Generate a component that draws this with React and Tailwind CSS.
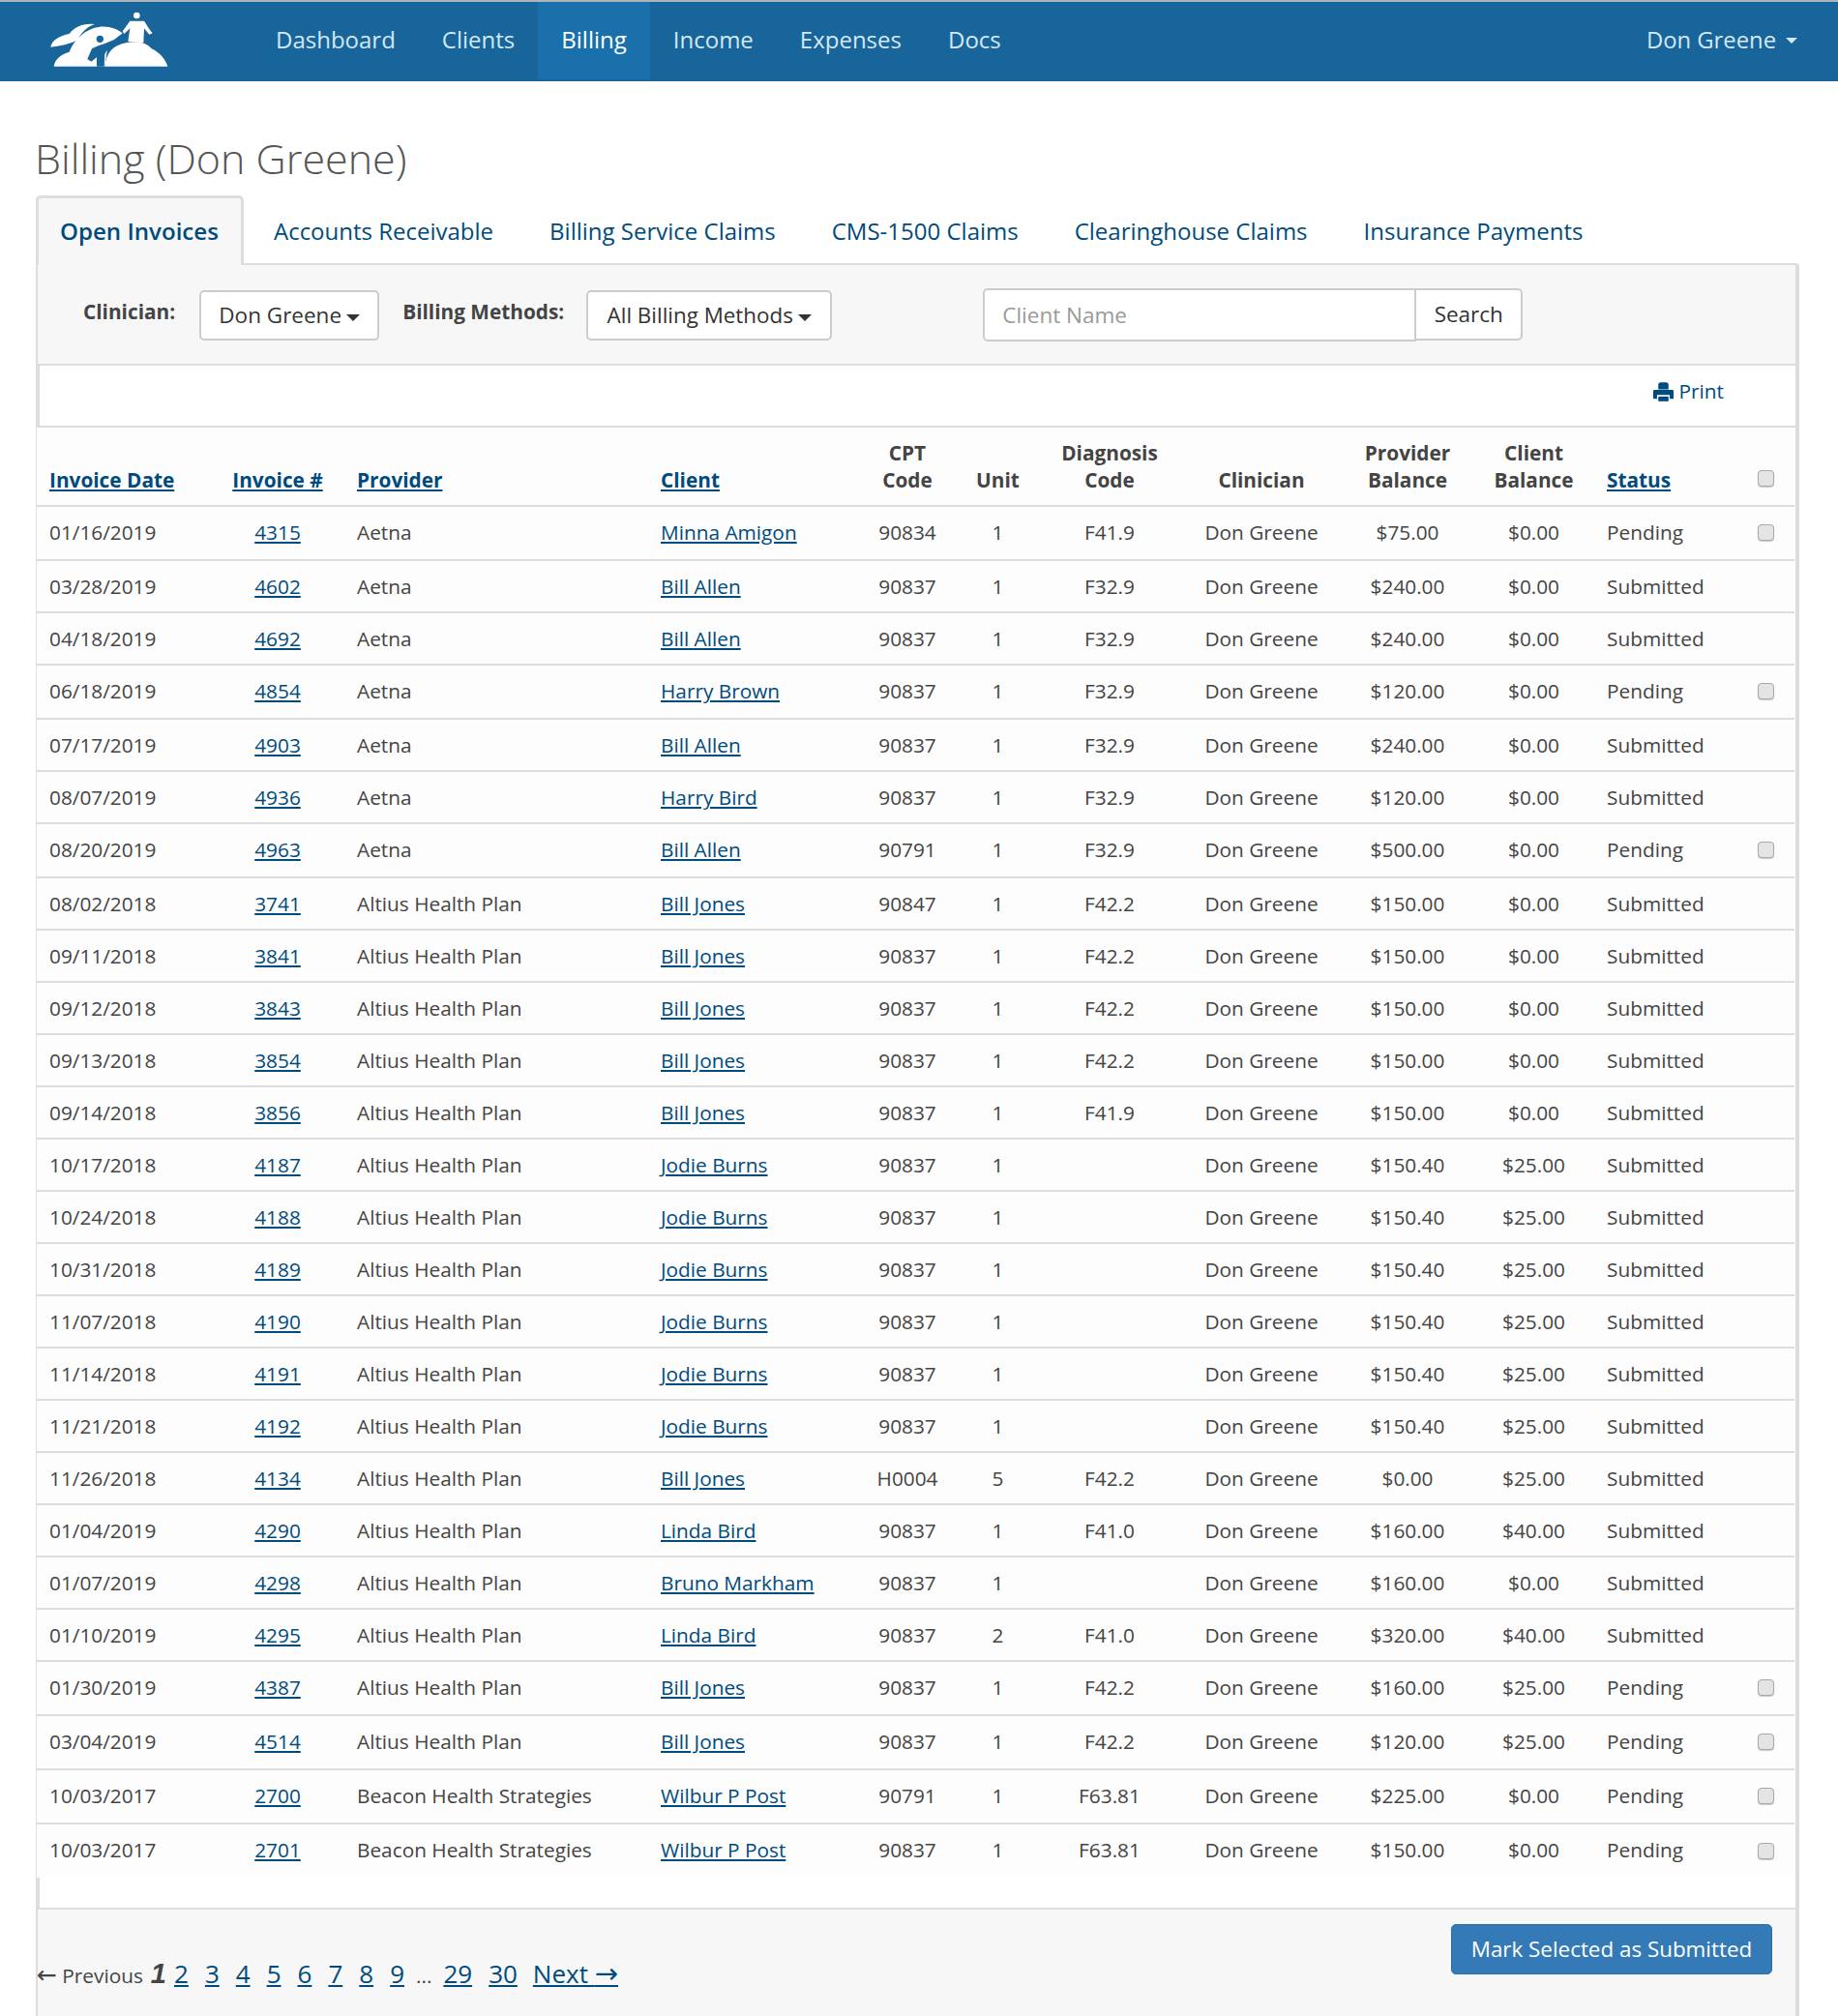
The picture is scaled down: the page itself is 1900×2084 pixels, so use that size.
const navItems = ["Dashboard", "Clients", "Billing", "Income", "Expenses", "Docs"];
const tabs = ["Accounts Receivable", "Billing Service Claims", "CMS-1500 Claims", "Clearinghouse Claims", "Insurance Payments"];

const rows = [
  ["01/16/2019", "4315", "Aetna", "Minna Amigon", "90834", "1", "F41.9", "$75.00", "$0.00", "Pending"],
  ["03/28/2019", "4602", "Aetna", "Bill Allen", "90837", "1", "F32.9", "$240.00", "$0.00", "Submitted"],
  ["04/18/2019", "4692", "Aetna", "Bill Allen", "90837", "1", "F32.9", "$240.00", "$0.00", "Submitted"],
  ["06/18/2019", "4854", "Aetna", "Harry Brown", "90837", "1", "F32.9", "$120.00", "$0.00", "Pending"],
  ["07/17/2019", "4903", "Aetna", "Bill Allen", "90837", "1", "F32.9", "$240.00", "$0.00", "Submitted"],
  ["08/07/2019", "4936", "Aetna", "Harry Bird", "90837", "1", "F32.9", "$120.00", "$0.00", "Submitted"],
  ["08/20/2019", "4963", "Aetna", "Bill Allen", "90791", "1", "F32.9", "$500.00", "$0.00", "Pending"],
  ["08/02/2018", "3741", "Altius Health Plan", "Bill Jones", "90847", "1", "F42.2", "$150.00", "$0.00", "Submitted"],
  ["09/11/2018", "3841", "Altius Health Plan", "Bill Jones", "90837", "1", "F42.2", "$150.00", "$0.00", "Submitted"],
  ["09/12/2018", "3843", "Altius Health Plan", "Bill Jones", "90837", "1", "F42.2", "$150.00", "$0.00", "Submitted"],
  ["09/13/2018", "3854", "Altius Health Plan", "Bill Jones", "90837", "1", "F42.2", "$150.00", "$0.00", "Submitted"],
  ["09/14/2018", "3856", "Altius Health Plan", "Bill Jones", "90837", "1", "F41.9", "$150.00", "$0.00", "Submitted"],
  ["10/17/2018", "4187", "Altius Health Plan", "Jodie Burns", "90837", "1", "", "$150.40", "$25.00", "Submitted"],
  ["10/24/2018", "4188", "Altius Health Plan", "Jodie Burns", "90837", "1", "", "$150.40", "$25.00", "Submitted"],
  ["10/31/2018", "4189", "Altius Health Plan", "Jodie Burns", "90837", "1", "", "$150.40", "$25.00", "Submitted"],
  ["11/07/2018", "4190", "Altius Health Plan", "Jodie Burns", "90837", "1", "", "$150.40", "$25.00", "Submitted"],
  ["11/14/2018", "4191", "Altius Health Plan", "Jodie Burns", "90837", "1", "", "$150.40", "$25.00", "Submitted"],
  ["11/21/2018", "4192", "Altius Health Plan", "Jodie Burns", "90837", "1", "", "$150.40", "$25.00", "Submitted"],
  ["11/26/2018", "4134", "Altius Health Plan", "Bill Jones", "H0004", "5", "F42.2", "$0.00", "$25.00", "Submitted"],
  ["01/04/2019", "4290", "Altius Health Plan", "Linda Bird", "90837", "1", "F41.0", "$160.00", "$40.00", "Submitted"],
  ["01/07/2019", "4298", "Altius Health Plan", "Bruno Markham", "90837", "1", "", "$160.00", "$0.00", "Submitted"],
  ["01/10/2019", "4295", "Altius Health Plan", "Linda Bird", "90837", "2", "F41.0", "$320.00", "$40.00", "Submitted"],
  ["01/30/2019", "4387", "Altius Health Plan", "Bill Jones", "90837", "1", "F42.2", "$160.00", "$25.00", "Pending"],
  ["03/04/2019", "4514", "Altius Health Plan", "Bill Jones", "90837", "1", "F42.2", "$120.00", "$25.00", "Pending"],
  ["10/03/2017", "2700", "Beacon Health Strategies", "Wilbur P Post", "90791", "1", "F63.81", "$225.00", "$0.00", "Pending"],
  ["10/03/2017", "2701", "Beacon Health Strategies", "Wilbur P Post", "90837", "1", "F63.81", "$150.00", "$0.00", "Pending"],
];

const pages = ["2", "3", "4", "5", "6", "7", "8", "9"];

function Logo() {
  return (
    <svg width="135" height="62" viewBox="0 0 405 186" fill="#fff">
      <path d="M22 113C25 92 50 78 80 72C95 50 125 38 158 42C135 50 118 68 105 92C75 104 50 110 22 113Z" />
      <path d="M32 173C35 150 55 135 80 128C95 90 130 55 175 50C205 47 230 58 245 70L200 105L190 173Z" />
      <path d="M190 173C195 130 215 108 255 100C290 92 320 100 335 118C360 130 378 150 385 173Z" />
      <circle cx="289" cy="15" r="10" />
      <path d="M268 32L312 32C320 45 330 60 338 70L328 74L312 55L310 100L262 95L268 55L250 72L245 64Z" />
      <circle cx="175" cy="88" r="11" fill="#17659a" />
      <path
        d="M136 150L150 118C170 108 200 100 232 85L236 90C215 110 195 120 190 135L188 173L165 173L165 145L148 158Z"
        fill="#17659a"
      />
    </svg>
  );
}

function PrintIcon() {
  return (
    <svg width="21" height="20" viewBox="0 0 64 60" fill="currentColor">
      <path d="M16 22V8Q16 0 24 0H40Q48 0 48 8V22Z" />
      <path d="M4 24H60Q64 24 64 28V52H52V40H12V52H0V28Q0 24 4 24Z" />
      <path d="M16 45H48V60H16Z" />
    </svg>
  );
}

function Caret({ className }) {
  return <span className={`inline-block w-0 h-0 border-x-[6px] border-x-transparent border-t-[6px] ${className}`} />;
}

function SelectCaret() {
  return <span className="inline-block w-0 h-0 mt-[4px] border-x-[7px] border-x-transparent border-t-[7px] border-t-[#333]" />;
}

function Navbar() {
  return (
    <nav className="h-[84px] flex bg-[#17659a] border-t-2 border-[#a9b4bb] pl-[45px] pr-[42px]">
      <div className="w-[216px] h-full flex items-center pb-[3px]">
        <Logo />
      </div>
      <ul className="flex flex-1 h-[80px]">
        {navItems.map((item) => (
          <li key={item}>
            <a
              href="#"
              className={`flex h-full items-center pb-[2px] px-[24px] text-[24px] ${
                item === "Billing" ? "bg-[#1a70ab] text-white" : "text-[#d4e8f5]"
              }`}
            >
              {item}
            </a>
          </li>
        ))}
      </ul>
      <a href="#" className="flex h-[80px] items-center gap-[10px] text-[23.8px] text-[#d4e8f5]">
        Don Greene
        <Caret className="border-t-[#d4e8f5]" />
      </a>
    </nav>
  );
}

function TabBar() {
  return (
    <ul className="flex h-[72px] relative z-10">
      <li className="h-[72px] border-[3px] border-b-0 border-[#ddd] rounded-t-[5px] bg-[#f7f7f7] pl-[22px] pr-[23px] flex items-center text-[24.1px] font-semibold text-[#004b7d]">
        <a href="#">Open Invoices</a>
      </li>
      {tabs.map((tab) => (
        <li key={tab} className="pl-[31px] pr-[27px] pt-[1px] flex items-center text-[24px] text-[#004b7d]">
          <a href="#">{tab}</a>
        </li>
      ))}
    </ul>
  );
}

function Filters() {
  return (
    <div className="h-[102px] flex items-start bg-[#f7f7f7]">
      <label className="mt-[32px] ml-[47px] text-[20.8px] leading-[32px] font-bold text-[#444]">Clinician:</label>
      <button className="mt-[26px] ml-[25px] w-[186px] h-[52px] flex items-center justify-center gap-[5px] bg-white border-2 border-[#ccc] rounded-[5px] text-[22.5px] text-[#333]">
        Don Greene
        <SelectCaret />
      </button>
      <label className="mt-[32px] ml-[24px] text-[20.8px] leading-[32px] font-bold text-[#444]">Billing Methods:</label>
      <button className="mt-[26px] ml-[23px] w-[254px] h-[52px] flex items-center justify-center gap-[5px] bg-white border-2 border-[#ccc] rounded-[5px] text-[22.4px] text-[#333]">
        All Billing Methods
        <SelectCaret />
      </button>
      <div className="mt-[24px] ml-[156px] flex">
        <input
          className="w-[448px] h-[55px] bg-white border-2 border-[#ccc] rounded-l-[5px] px-[18px] text-[22.5px] placeholder:text-[#999] outline-none"
          placeholder="Client Name"
        />
        <button className="-ml-[1px] w-[111px] h-[54px] bg-white border-2 border-l-1 border-[#ccc] rounded-r-[5px] text-[22.5px] text-[#333]">
          Search
        </button>
      </div>
    </div>
  );
}

function Check() {
  return (
    <input
      type="checkbox"
      className="appearance-none block mx-auto w-[17px] h-[17px] rounded-[4px] bg-[#e4e4e4] border-[1.5px] border-[#a8a8a8] shadow-[0_1px_1px_rgba(0,0,0,0.2)]"
    />
  );
}

function SortLink({ children }) {
  return (
    <a href="#" className="text-[#004b7d] underline">
      {children}
    </a>
  );
}

function InvoiceTable() {
  return (
    <table className="-ml-[3px] w-[1817px] table-fixed border-collapse bg-[#fdfdfd] text-[20.8px] text-[#444]">
      <colgroup>
        <col className="w-[194px]" />
        <col className="w-[110px]" />
        <col className="w-[330px]" />
        <col className="w-[220px]" />
        <col className="w-[92px]" />
        <col className="w-[95px]" />
        <col className="w-[136px]" />
        <col className="w-[178px]" />
        <col className="w-[124px]" />
        <col className="w-[137px]" />
        <col className="w-[142px]" />
        <col className="w-[59px]" />
      </colgroup>
      <thead>
        <tr className="h-[81px] border-b-2 border-[#ddd] align-bottom leading-[28px] font-bold">
          <th className="pl-[13px] pb-[12px] text-left"><SortLink>Invoice Date</SortLink></th>
          <th className="pb-[12px] text-center"><SortLink>Invoice #</SortLink></th>
          <th className="pl-[27px] pb-[12px] text-left"><SortLink>Provider</SortLink></th>
          <th className="pl-[11px] pb-[12px] text-left"><SortLink>Client</SortLink></th>
          <th className="pb-[12px] text-center">CPT<br />Code</th>
          <th className="pb-[12px] text-center">Unit</th>
          <th className="pb-[12px] text-center">Diagnosis<br />Code</th>
          <th className="pb-[12px] text-center">Clinician</th>
          <th className="pb-[12px] text-center">Provider<br />Balance</th>
          <th className="pb-[12px] text-center">Client<br />Balance</th>
          <th className="pl-[7px] pb-[12px] text-left"><SortLink>Status</SortLink></th>
          <th className="pb-[19px]"><Check /></th>
        </tr>
      </thead>
      <tbody>
        {rows.map((r, i) => {
          const pending = r[9] === "Pending";
          return (
            <tr
              key={r[1]}
              className={`${pending ? "h-[56px] [&>td]:pb-[1px]" : "h-[54px] [&>td]:pt-[1px]"} ${i < rows.length - 1 ? "border-b-2 border-[#ddd]" : ""}`}
            >
              <td className="pl-[13px]">{r[0]}</td>
              <td className="text-center"><SortLink>{r[1]}</SortLink></td>
              <td className="pl-[27px]">{r[2]}</td>
              <td className="pl-[11px]"><SortLink>{r[3]}</SortLink></td>
              <td className="text-center">{r[4]}</td>
              <td className="text-center">{r[5]}</td>
              <td className="text-center">{r[6]}</td>
              <td className="text-center">Don Greene</td>
              <td className="text-center">{r[7]}</td>
              <td className="text-center">{r[8]}</td>
              <td className="pl-[7px]">{r[9]}</td>
              <td>{pending && <Check />}</td>
            </tr>
          );
        })}
      </tbody>
    </table>
  );
}

function Pagination() {
  return (
    <div className="mt-[30px] -ml-[1px] flex items-baseline text-[#444]">
      <span className="text-[20.8px]">
        <span className="font-['DejaVu_Sans'] text-[25px]">←</span> Previous
      </span>
      <em className="ml-[8px] text-[29px] font-bold italic font-['Liberation_Sans']">1</em>
      {pages.map((p, i) => (
        <a key={p} href="#" className={`${i === 0 ? "ml-[8px]" : "ml-[17px]"} text-[26px] text-[#004b7d] underline`}>
          {p}
        </a>
      ))}
      <span className="ml-[12px] text-[20.8px]">...</span>
      <a href="#" className="ml-[12px] text-[26px] text-[#004b7d] underline">29</a>
      <a href="#" className="ml-[17px] text-[26px] text-[#004b7d] underline">30</a>
      <a href="#" className="ml-[16px] text-[26px] text-[#004b7d] underline">
        Next <span className="font-['DejaVu_Sans'] text-[29px] leading-none">→</span>
      </a>
    </div>
  );
}

export default function App() {
  return (
    <div className="h-[2084px] overflow-hidden bg-white font-['Open_Sans',sans-serif]">
      <Navbar />
      <main className="pl-[37px] pr-[40px]">
        <h1 className="-ml-[1px] pt-[53px] pb-[11px] text-[43px] leading-[54px] font-light text-[#555]">Billing (Don Greene)</h1>
        <TabBar />
        <div className="h-[1812px] -mt-[2px] border-t-[2px] border-l-[2px] border-r-[4px] border-[#ddd] rounded-t-[4px] bg-[#f7f7f7]">
          <Filters />
          <section className="bg-white border-y-2 border-l-2 border-[#ddd]">
            <div className="h-[62px] flex justify-end items-center pb-[8px] pr-[74px] text-[20.8px] text-[#004b7d]">
              <a href="#" className="flex items-center gap-[6px]">
                <PrintIcon />
                Print
              </a>
            </div>
            <div className="border-t-2 border-[#ddd]">
              <InvoiceTable />
            </div>
            <div className="h-[31px]" />
          </section>
          <div className="flex justify-between items-start pt-[15px] pr-[24px]">
            <Pagination />
            <button className="w-[332px] h-[52px] rounded-[5px] bg-[#337ab7] border border-[#2e6da4] text-[22.4px] text-white">
              Mark Selected as Submitted
            </button>
          </div>
        </div>
      </main>
    </div>
  );
}
